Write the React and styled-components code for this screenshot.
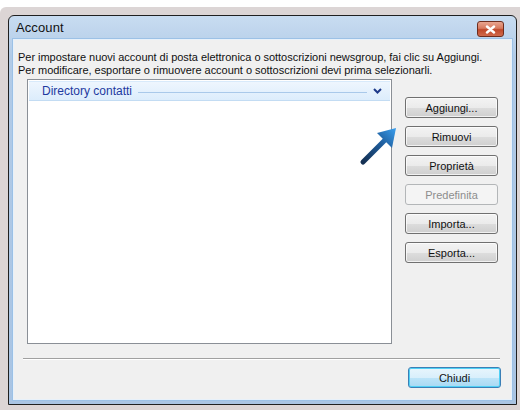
import React from 'react';
import styled, { createGlobalStyle } from 'styled-components';

const GlobalStyle = createGlobalStyle`
  html, body {
    margin: 0;
    padding: 0;
    background: #ffffff;
  }
  body {
    font-family: "Liberation Sans", Arial, sans-serif;
  }
`;

const Frame = styled.div`
  position: relative;
  margin-top: 7px;
  width: 510px;
  height: 387px;
  padding: 8px 2px 8px 8px;
  background: #dcd5d5;
  border-radius: 6px 0 0 0;
`;

const Window = styled.div`
  width: 501px;
  height: 385px;
  display: flex;
  flex-direction: column;
  border: 1px solid #202020;
  border-radius: 6px 6px 0 0;
  background: linear-gradient(#c8dcf1, #b2cbe7 40px, #a9c4e3);
  padding: 0 3px 3px 3px;
  box-sizing: content-box;
`;

const TitleBar = styled.div`
  height: 22px;
  display: flex;
  align-items: center;
  justify-content: space-between;
  padding: 0 9px 0 4px;
`;

const Title = styled.span`
  font-size: 13px;
  color: #111;
  letter-spacing: 0.1px;
`;

const CloseButton = styled.div`
  width: 25px;
  height: 14px;
  margin-top: 4px;
  display: flex;
  align-items: center;
  justify-content: center;
  border: 1px solid #6e2d1e;
  border-radius: 3px;
  background: linear-gradient(#e9a590, #d77a5f 45%, #c0482a 55%, #d06a4c);
`;

const Client = styled.div`
  flex: 1;
  display: flex;
  flex-direction: column;
  background: #f0f0f0;
  border: 1px solid #9cc1e6;
  box-shadow: inset 0 0 0 1px #e8f1fa;
`;

const Intro = styled.p`
  margin: 12px 0 0 5px;
  font-size: 11px;
  line-height: 13px;
  color: #111;
  letter-spacing: -0.03px;
`;

const Main = styled.div`
  display: flex;
  margin: 2px 0 0 14px;
`;

const ListBox = styled.div`
  width: 361px;
  height: 261px;
  border: 1px solid #8a8f96;
  background: #ffffff;
  padding: 1px;
  box-sizing: content-box;
`;

const GroupHeader = styled.div`
  height: 18px;
  display: flex;
  align-items: center;
  gap: 6px;
  padding: 0 8px 0 13px;
  background: linear-gradient(#eef6fe, #dcedfc);
  border-bottom: 1px solid #c3dcf3;
  border-top: 1px solid #d8eafb;
`;

const GroupTitle = styled.span`
  font-size: 12px;
  color: #1e3aa0;
  white-space: nowrap;
`;

const GroupRule = styled.div`
  flex: 1;
  height: 1px;
  background: #a9c9ea;
  margin-top: 2px;
`;

const ButtonColumn = styled.div`
  display: flex;
  flex-direction: column;
  gap: 8px;
  margin: 18px 0 0 13px;
`;

const Button = styled.button`
  width: 93px;
  height: 21px;
  padding: 0;
  font-family: "Liberation Sans", Arial, sans-serif;
  font-size: 11px;
  color: ${p => (p.disabled ? '#8d8d8d' : '#111')};
  border: 1px solid ${p => (p.disabled ? '#b3b6b8' : p.$primary ? '#3b7fb6' : '#707070')};
  border-radius: 3px;
  background: ${p =>
    p.disabled
      ? '#f4f4f4'
      : p.$primary
      ? 'linear-gradient(#e8f5fc, #d9effb 50%, #bde4f8 51%, #a8d9f3)'
      : 'linear-gradient(#f3f3f3, #ebebeb 50%, #dddddd 51%, #cfcfcf)'};
  box-shadow: ${p =>
    p.$primary
      ? 'inset 0 0 0 1px #4fd0f5'
      : p.disabled
      ? 'none'
      : 'inset 0 0 0 1px rgba(255,255,255,0.7)'};
`;

const Separator = styled.div`
  height: 1px;
  margin: 14px 12px 0 10px;
  background: #a0a0a0;
  border-bottom: 1px solid #ffffff;
`;

const Footer = styled.div`
  display: flex;
  justify-content: flex-end;
  padding: 7px 11px 0 0;
`;

const Arrow = styled.svg`
  position: absolute;
  left: 355px;
  top: 115px;
`;

export default function App() {
  return (
    <>
      <GlobalStyle />
      <Frame>
        <Window>
          <TitleBar>
            <Title>Account</Title>
            <CloseButton>
              <svg width="11" height="9" viewBox="0 0 11 9">
                <path d="M2 1.5 L9 7.5 M9 1.5 L2 7.5" stroke="#ffffff" strokeWidth="2.4" strokeLinecap="round" />
              </svg>
            </CloseButton>
          </TitleBar>
          <Client>
            <Intro>
              Per impostare nuovi account di posta elettronica o sottoscrizioni newsgroup, fai clic su Aggiungi.
              <br />
              Per modificare, esportare o rimuovere account o sottoscrizioni devi prima selezionarli.
            </Intro>
            <Main>
              <ListBox>
                <GroupHeader>
                  <GroupTitle>Directory contatti</GroupTitle>
                  <GroupRule />
                  <svg width="9" height="6" viewBox="0 0 9 6">
                    <path d="M1 1 L4.5 4.5 L8 1" fill="none" stroke="#1e3a8a" strokeWidth="2" />
                  </svg>
                </GroupHeader>
              </ListBox>
              <ButtonColumn>
                <Button>Aggiungi...</Button>
                <Button>Rimuovi</Button>
                <Button>Proprietà</Button>
                <Button disabled>Predefinita</Button>
                <Button>Importa...</Button>
                <Button>Esporta...</Button>
              </ButtonColumn>
            </Main>
            <Separator />
            <Footer>
              <Button $primary>Chiudi</Button>
            </Footer>
          </Client>
        </Window>
        <Arrow width="50" height="50" viewBox="0 0 50 50">
          <defs>
            <linearGradient id="arrowFill" gradientUnits="userSpaceOnUse" x1="8" y1="40" x2="41" y2="6">
              <stop offset="0" stopColor="#142f52" />
              <stop offset="0.55" stopColor="#1f5d9c" />
              <stop offset="1" stopColor="#3aa0f0" />
            </linearGradient>
          </defs>
          <line x1="8" y1="40" x2="31" y2="17" stroke="url(#arrowFill)" strokeWidth="5" strokeLinecap="round" />
          <polygon points="41,6 22,11 37,26" fill="url(#arrowFill)" />
        </Arrow>
      </Frame>
    </>
  );
}
